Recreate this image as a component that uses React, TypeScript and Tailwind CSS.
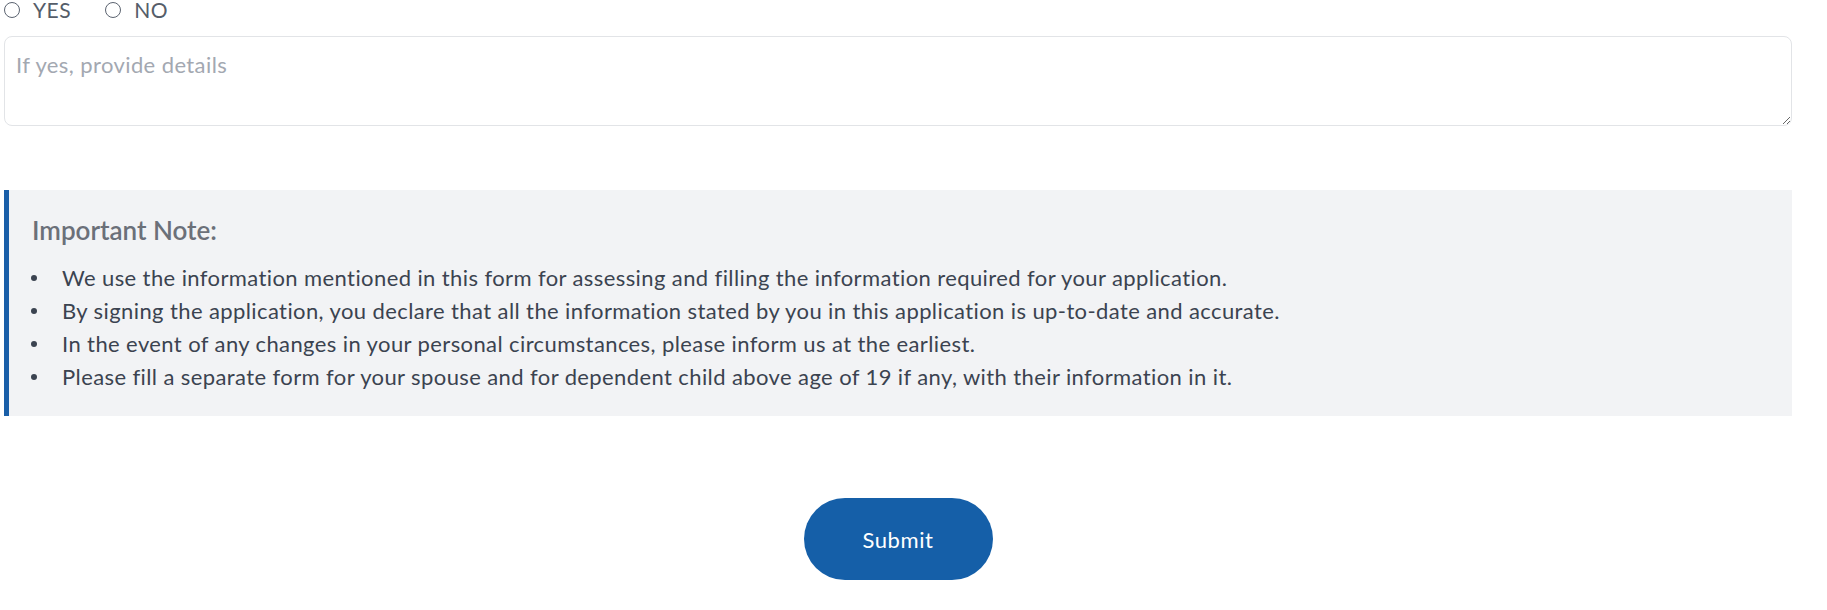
import React from "react";

const notes = [
  "We use the information mentioned in this form for assessing and filling the information required for your application.",
  "By signing the application, you declare that all the information stated by you in this application is up-to-date and accurate.",
  "In the event of any changes in your personal circumstances, please inform us at the earliest.",
  "Please fill a separate form for your spouse and for dependent child above age of 19 if any, with their information in it.",
];

function Radio({ label }: { label: string }) {
  return (
    <label className="flex items-center gap-[13px]">
      <span className="w-4 h-4 rounded-full border border-[#5b6370] bg-white" />
      <span>{label}</span>
    </label>
  );
}

export default function App() {
  return (
    <div
      className="w-[1827px] h-[610px] bg-white overflow-hidden"
      style={{ fontFamily: "Lato, 'Open Sans', sans-serif" }}
    >
      <div className="w-[1788px] ml-[4px] flex flex-col">
        <div className="flex items-center gap-[34px] text-[21px] leading-[20px] tracking-[0.5px] text-[#555d69]">
          <Radio label="YES" />
          <Radio label="NO" />
        </div>

        <textarea
          className="mt-[16px] h-[90px] w-full resize-y rounded-[8px] border border-[#e2e4e7] bg-white px-[11px] pt-[11px] text-[22px] leading-[33px] tracking-[0.4px] text-[#3b4350] placeholder:text-[#a3a8b1] outline-none"
          placeholder="If yes, provide details"
        />

        <div className="mt-[64px] border-l-[5px] border-[#1a5fa8] bg-[#f2f3f5] pl-[21px] pt-[24px] pb-[23px]">
          <h3 className="pl-[2px] text-[26px] leading-[32px] font-semibold text-[#6b7079]">
            Important Note:
          </h3>
          <ul className="mt-[15px] flex flex-col">
            {notes.map((note) => (
              <li
                key={note}
                className="flex items-center text-[22px] leading-[33px] tracking-[0.4px] text-[#3b4350]"
              >
                <span className="ml-[1px] mr-[25px] w-[6px] h-[6px] rounded-full bg-[#3b4350] shrink-0" />
                <span>{note}</span>
              </li>
            ))}
          </ul>
        </div>

        <div className="mt-[82px] flex justify-center">
          <button className="w-[189px] h-[82px] rounded-full bg-[#155fa8] text-white text-[22px] tracking-[0.6px]">
            Submit
          </button>
        </div>
      </div>
    </div>
  );
}
